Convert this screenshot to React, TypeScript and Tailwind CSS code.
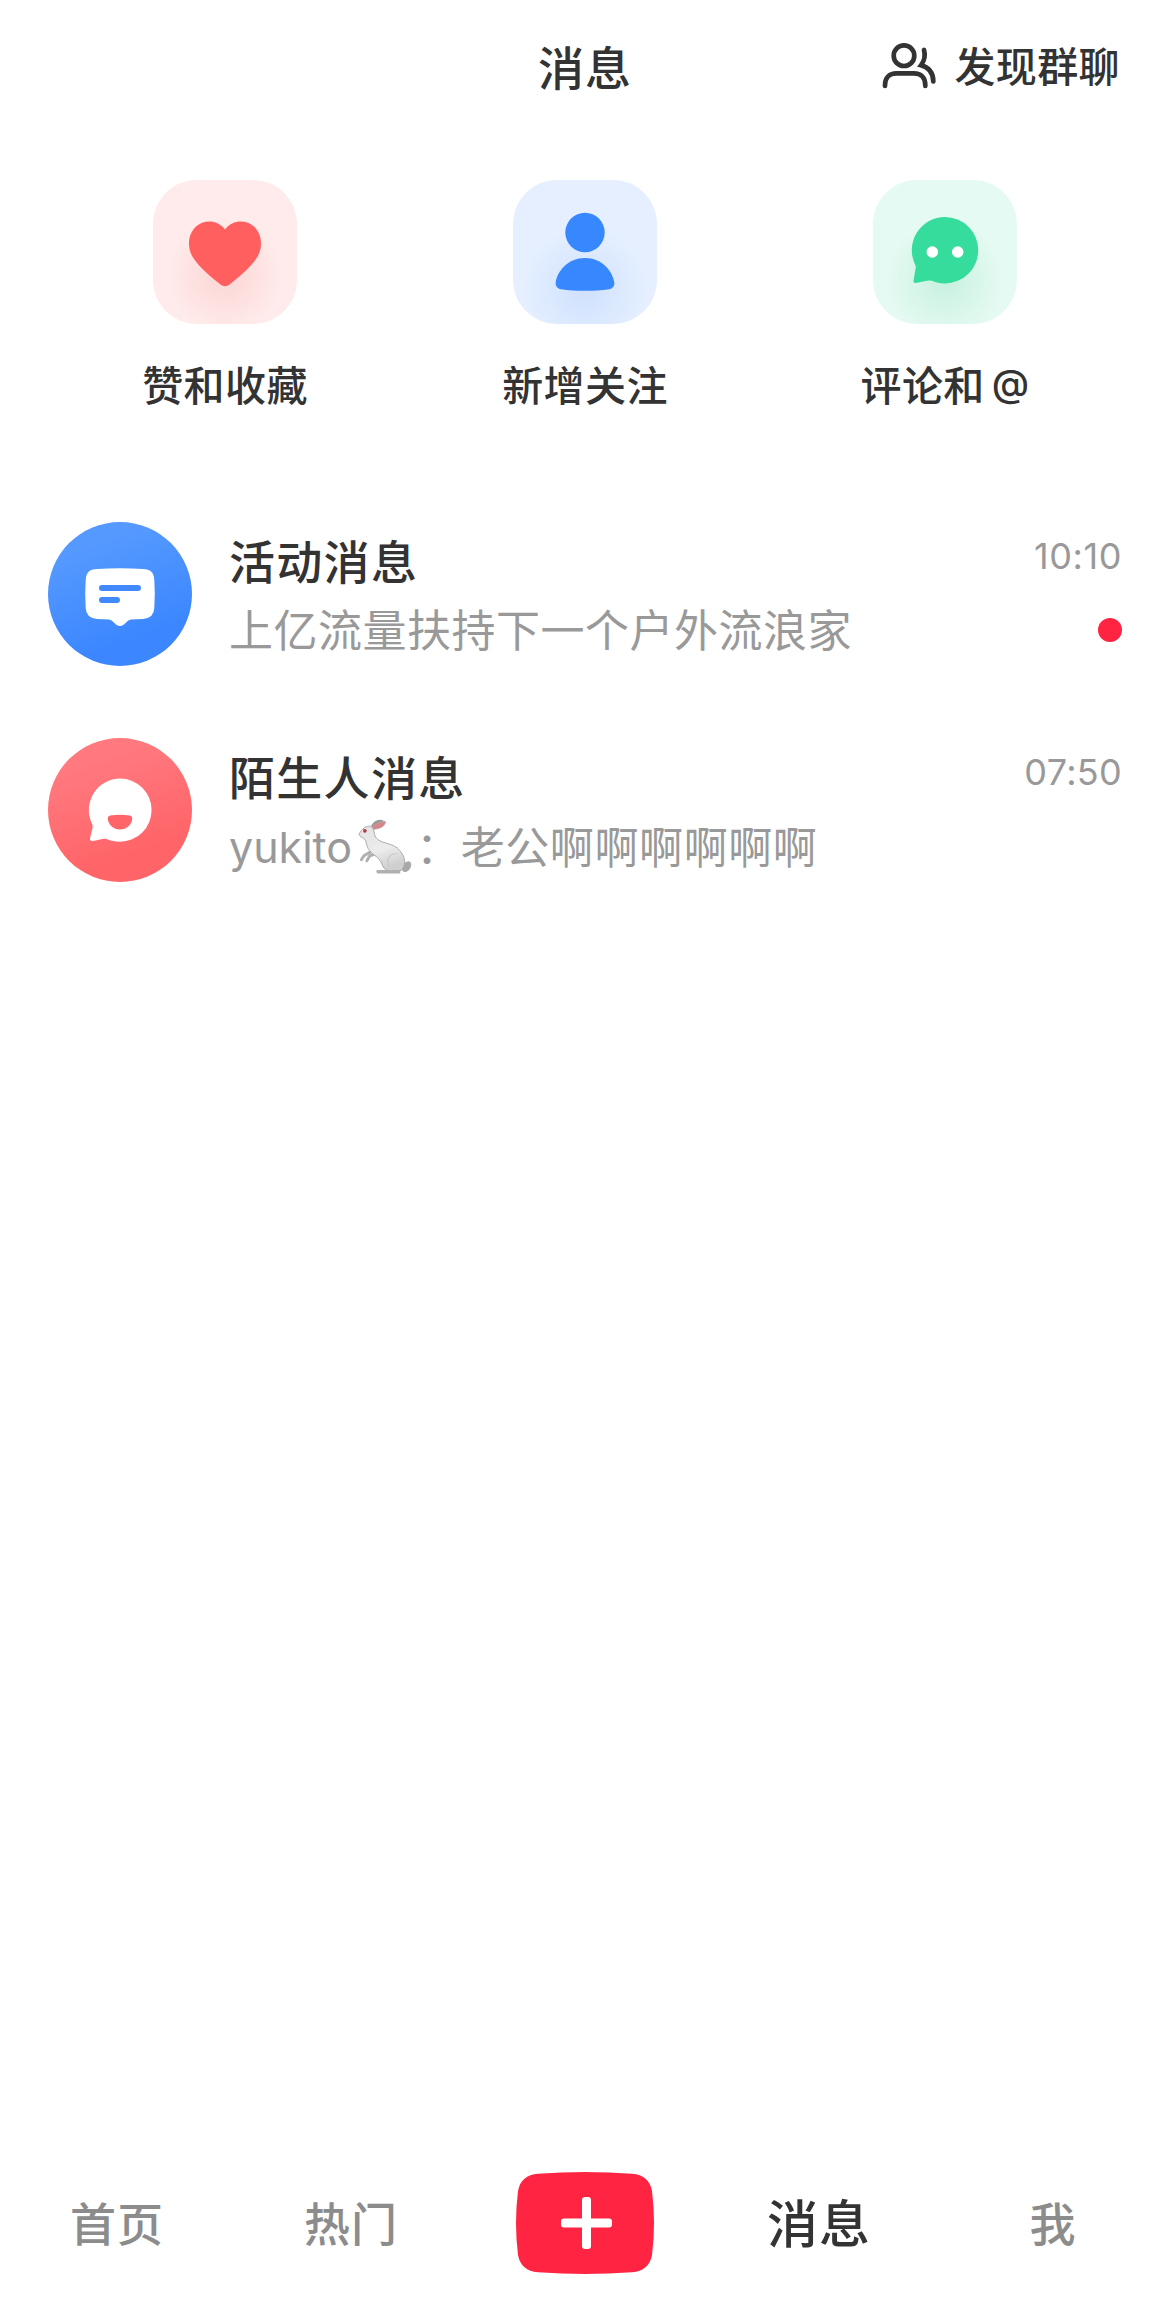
import React from "react";

function UsersIcon() {
  return (
    <svg width="54" height="48" viewBox="0 0 54 48" fill="none" stroke="#333" strokeWidth="4.700" strokeLinecap="round">
      <circle cx="22" cy="13.7" r="10.3" />
      <path d="M3 44V43C3 35.500 7.500 31.300 14.500 31.300H32C39 31.300 43.300 35.500 43.300 43V44" />
      <path d="M42 8C43.600 13.500 42.500 18.500 39 23.300C46.500 25.300 51.300 30.500 51.300 39.500" />
    </svg>
  );
}

function HeartIcon() {
  return (
    <svg width="144" height="144" viewBox="0 0 144 144">
      <path fill="#ff5f5f" d="M72 49.500C64 38.500 50 40 43 46.500C34.500 54.500 34 68 40 77.500C46 87 58 97 67.500 104.500C70.500 106.700 73.500 106.700 76.500 104.500C86 97 98 87 104 77.500C110 68 109.500 54.500 101 46.500C94 40 80 38.500 72 49.500Z" />
    </svg>
  );
}

function PersonIcon() {
  return (
    <svg width="144" height="144" viewBox="0 0 144 144" fill="#3787ff">
      <circle cx="72" cy="52.500" r="19.700" />
      <path d="M72 78C89 78 99.500 91 101.300 102.500C101.800 106 99.500 108.800 96 109.200C81 111.300 63 111.300 48 109.200C44.500 108.800 42.200 106 42.700 102.500C44.500 91 55 78 72 78Z" />
    </svg>
  );
}

function CommentIcon() {
  return (
    <svg width="144" height="144" viewBox="0 0 144 144">
      <path fill="#35dc9b" d="M72 37A33.200 33.200 0 1 1 72 103.400C67 103.400 62.500 102.300 58.500 100.700C55 100 48 102.300 43 103C41 103.200 40.200 102 40.600 100.200L42.700 88C43 86.200 42.500 85.500 41.800 84A33.200 33.200 0 0 1 72 37Z" />
      <circle cx="59.300" cy="72" r="5.800" fill="#fff" />
      <circle cx="84.700" cy="72" r="5.800" fill="#fff" />
    </svg>
  );
}

function ActivityIcon() {
  return (
    <svg width="144" height="144" viewBox="0 0 144 144">
      <path fill="#fff" d="M49 47Q72 45.500 95 47Q106 47 106.300 58Q107.300 72 106.300 86Q106 96 95 97L83 97.500C78.500 98 77 104 72 104C67 104 65.500 98 61 97.500L49 97Q38 96 37.700 86Q36.700 72 37.700 58Q38 47 49 47Z" />
      <path d="M54 66H90M54 78H69" stroke="#4189fd" strokeWidth="6" strokeLinecap="round" />
    </svg>
  );
}

function StrangerIcon() {
  return (
    <svg width="144" height="144" viewBox="0 0 144 144">
      <path fill="#fff" d="M72 40.500A31.600 31.600 0 1 1 72 103.700C67 103.700 62.500 102.700 58.500 101C55 100 50 102.500 44.500 103C42.500 103.200 41.800 102 42 100.500L44.500 90C45 88 44.500 86.500 43.600 85A31.600 31.600 0 0 1 72 40.500Z" />
      <path fill="#ff6569" d="M62 77.500Q72 76 82 77.500Q85 78.500 84 82.500C80.500 94.500 63.500 94.500 60 82.500Q59 78.500 62 77.500Z" />
    </svg>
  );
}

function Rabbit() {
  return (
    <svg className="shrink-0" width="55" height="57" viewBox="0 0 56 57">
      <defs>
        <linearGradient id="fur" x1="0" y1="0" x2="0.300" y2="1">
          <stop offset="0" stopColor="#e2e2e2" />
          <stop offset="0.600" stopColor="#ececec" />
          <stop offset="1" stopColor="#cfcfcf" />
        </linearGradient>
      </defs>
      <path d="M13 8C16 2 21 0 26 2L25 5L17 9Z" fill="#999" />
      <path d="M13 10C18 5 23 3 28 3C28 8 22 11 14 11Z" fill="#d98488" stroke="#b9a4a4" strokeWidth="0.800" />
      <ellipse cx="49.500" cy="49" rx="4" ry="6" transform="rotate(35 49.500 49)" fill="#a9a9a9" />
      <path d="M13 34L6 38L3.500 42M18 36L12 38L9 43" fill="none" stroke="#b0b0b0" strokeWidth="3" strokeLinecap="round" strokeLinejoin="round" />
      <path d="M1 16C4 10 9 7 13 8C17 10 16 16 18 19C23 26 32 24 40 30C47 36 50 45 45 52C39 56 31 55 26 50C24 46 23 42 19 39C13 35 9 31 8 23C7 19 2 20 1 16Z" fill="url(#fur)" stroke="#a3a3a3" strokeWidth="0.900" />
      <path d="M32 49C28 41 33 35 40 36" fill="none" stroke="#c8c8c8" strokeWidth="1.200" />
      <path d="M20 52.500H43V56H20Q17 54 20 52.500Z" fill="#b0b0b0" />
      <circle cx="7" cy="12.500" r="1.900" fill="#b13b44" />
    </svg>
  );
}

const entries = [
  { label: "赞和收藏", at: false, Icon: HeartIcon, tile: "bg-[radial-gradient(circle_at_50%_66%,#fbd6d5_0%,#fddfde_22%,#ffebeb_48%)]" },
  { label: "新增关注", at: false, Icon: PersonIcon, tile: "bg-[radial-gradient(circle_at_50%_76%,#cfe0fe_0%,#d8e7fe_20%,#e5efff_48%)]" },
  { label: "评论和", at: true, Icon: CommentIcon, tile: "bg-[radial-gradient(circle_at_50%_70%,#c6f1df_0%,#d6f5e9_22%,#e5faf2_48%)]" },
];

const cjk = "font-['Noto_Sans_CJK_SC',sans-serif]";

export default function App() {
  return (
    <div className={`${cjk} flex h-[2313px] w-[1170px] flex-col bg-white text-[#333]`}>
      <header className="grid h-[132px] grid-cols-3 items-center px-[50px]">
        <span />
        <h1 className="mb-[3px] text-center text-[46px] leading-none font-medium tracking-[1px]">消息</h1>
        <div className="flex items-center justify-end gap-[18px]">
          <UsersIcon />
          <span className="mb-[4px] text-[41px] leading-none font-medium tracking-[0.400px]">发现群聊</span>
        </div>
      </header>

      <section className="grid grid-cols-3 px-[45px] pt-12">
        {entries.map(({ label, at, Icon, tile }) => (
          <div key={label} className="flex flex-col items-center">
            <div className={`size-36 rounded-[44px] ${tile}`}>
              <Icon />
            </div>
            <span className="mt-[39px] flex h-[41px] text-[41px] leading-[41px] font-medium tracking-[0.400px]">
              {label}
              {at && <span className="ml-[7px] font-[Inter] text-[38px] font-medium">@</span>}
            </span>
          </div>
        ))}
      </section>

      <main className="mt-[118px] flex flex-1 flex-col gap-[72px] px-12">
        <article className="flex h-36">
          <div className="size-36 shrink-0 rounded-full bg-linear-160 from-[#5599ff] from-20% to-[#3c87ff] to-75%">
            <ActivityIcon />
          </div>
          <div className="ml-[37px] flex flex-1 flex-col">
            <div className="mt-[13px] flex h-12 justify-between">
              <h2 className="text-[46px] leading-[48px] font-medium tracking-[1.300px]">活动消息</h2>
              <time className="mt-px font-[Inter] text-[36px] leading-[40px] tracking-[0.600px] text-[#999]">10:10</time>
            </div>
            <div className="mt-[21px] flex h-12 justify-between">
              <p className="text-[44px] leading-[48px] tracking-[0.500px] text-[#999]">上亿流量扶持下一个户外流浪家</p>
              <span className="mt-[14px] size-6 rounded-full bg-[#ff2442]" />
            </div>
          </div>
        </article>
        <article className="flex h-36">
          <div className="size-36 shrink-0 rounded-full bg-linear-160 from-[#ff797f] from-20% to-[#ff6468] to-75%">
            <StrangerIcon />
          </div>
          <div className="ml-[37px] flex flex-1 flex-col">
            <div className="mt-[13px] flex h-12 justify-between">
              <h2 className="text-[46px] leading-[48px] font-medium tracking-[1.300px]">陌生人消息</h2>
              <time className="mt-px font-[Inter] text-[36px] leading-[40px] tracking-[0.300px] text-[#999]">07:50</time>
            </div>
            <div className="mt-[22px] flex h-12 items-center text-[44px] leading-[48px] text-[#999]">
              <span className="mt-[3px] font-[Inter] text-[43px]">yukito</span>
              <span className="mt-[2px] ml-[6px] flex">
                <Rabbit />
              </span>
              <span className="ml-[3px] tracking-[0.600px]">：老公啊啊啊啊啊啊</span>
            </div>
          </div>
        </article>
      </main>

      <nav className="mb-[24px] grid h-[132px] grid-cols-5 items-center text-center text-[46px] leading-none font-medium tracking-[1px] text-[#8c8c8c]">
        <span className="mb-[5px]">首页</span>
        <span className="mb-[5px]">热门</span>
        <span className="flex justify-center">
          <svg width="138" height="102" viewBox="0 0 138 102">
            <path fill="#ff2442" d="M22 1.800Q69 -1.800 116 1.800Q133 3 136 19Q140 51 136 83Q133 99 116 100.200Q69 103.800 22 100.200Q5 99 2 83Q-2 51 2 19Q5 3 22 1.800Z" />
            <rect x="66" y="25" width="9" height="52" rx="3" fill="#fff" />
            <rect x="45" y="46.500" width="51" height="9" rx="3" fill="#fff" />
          </svg>
        </span>
        <span className="mb-[3px] text-[51px] text-[#333]">消息</span>
        <span className="mb-[5px]">我</span>
      </nav>
    </div>
  );
}
